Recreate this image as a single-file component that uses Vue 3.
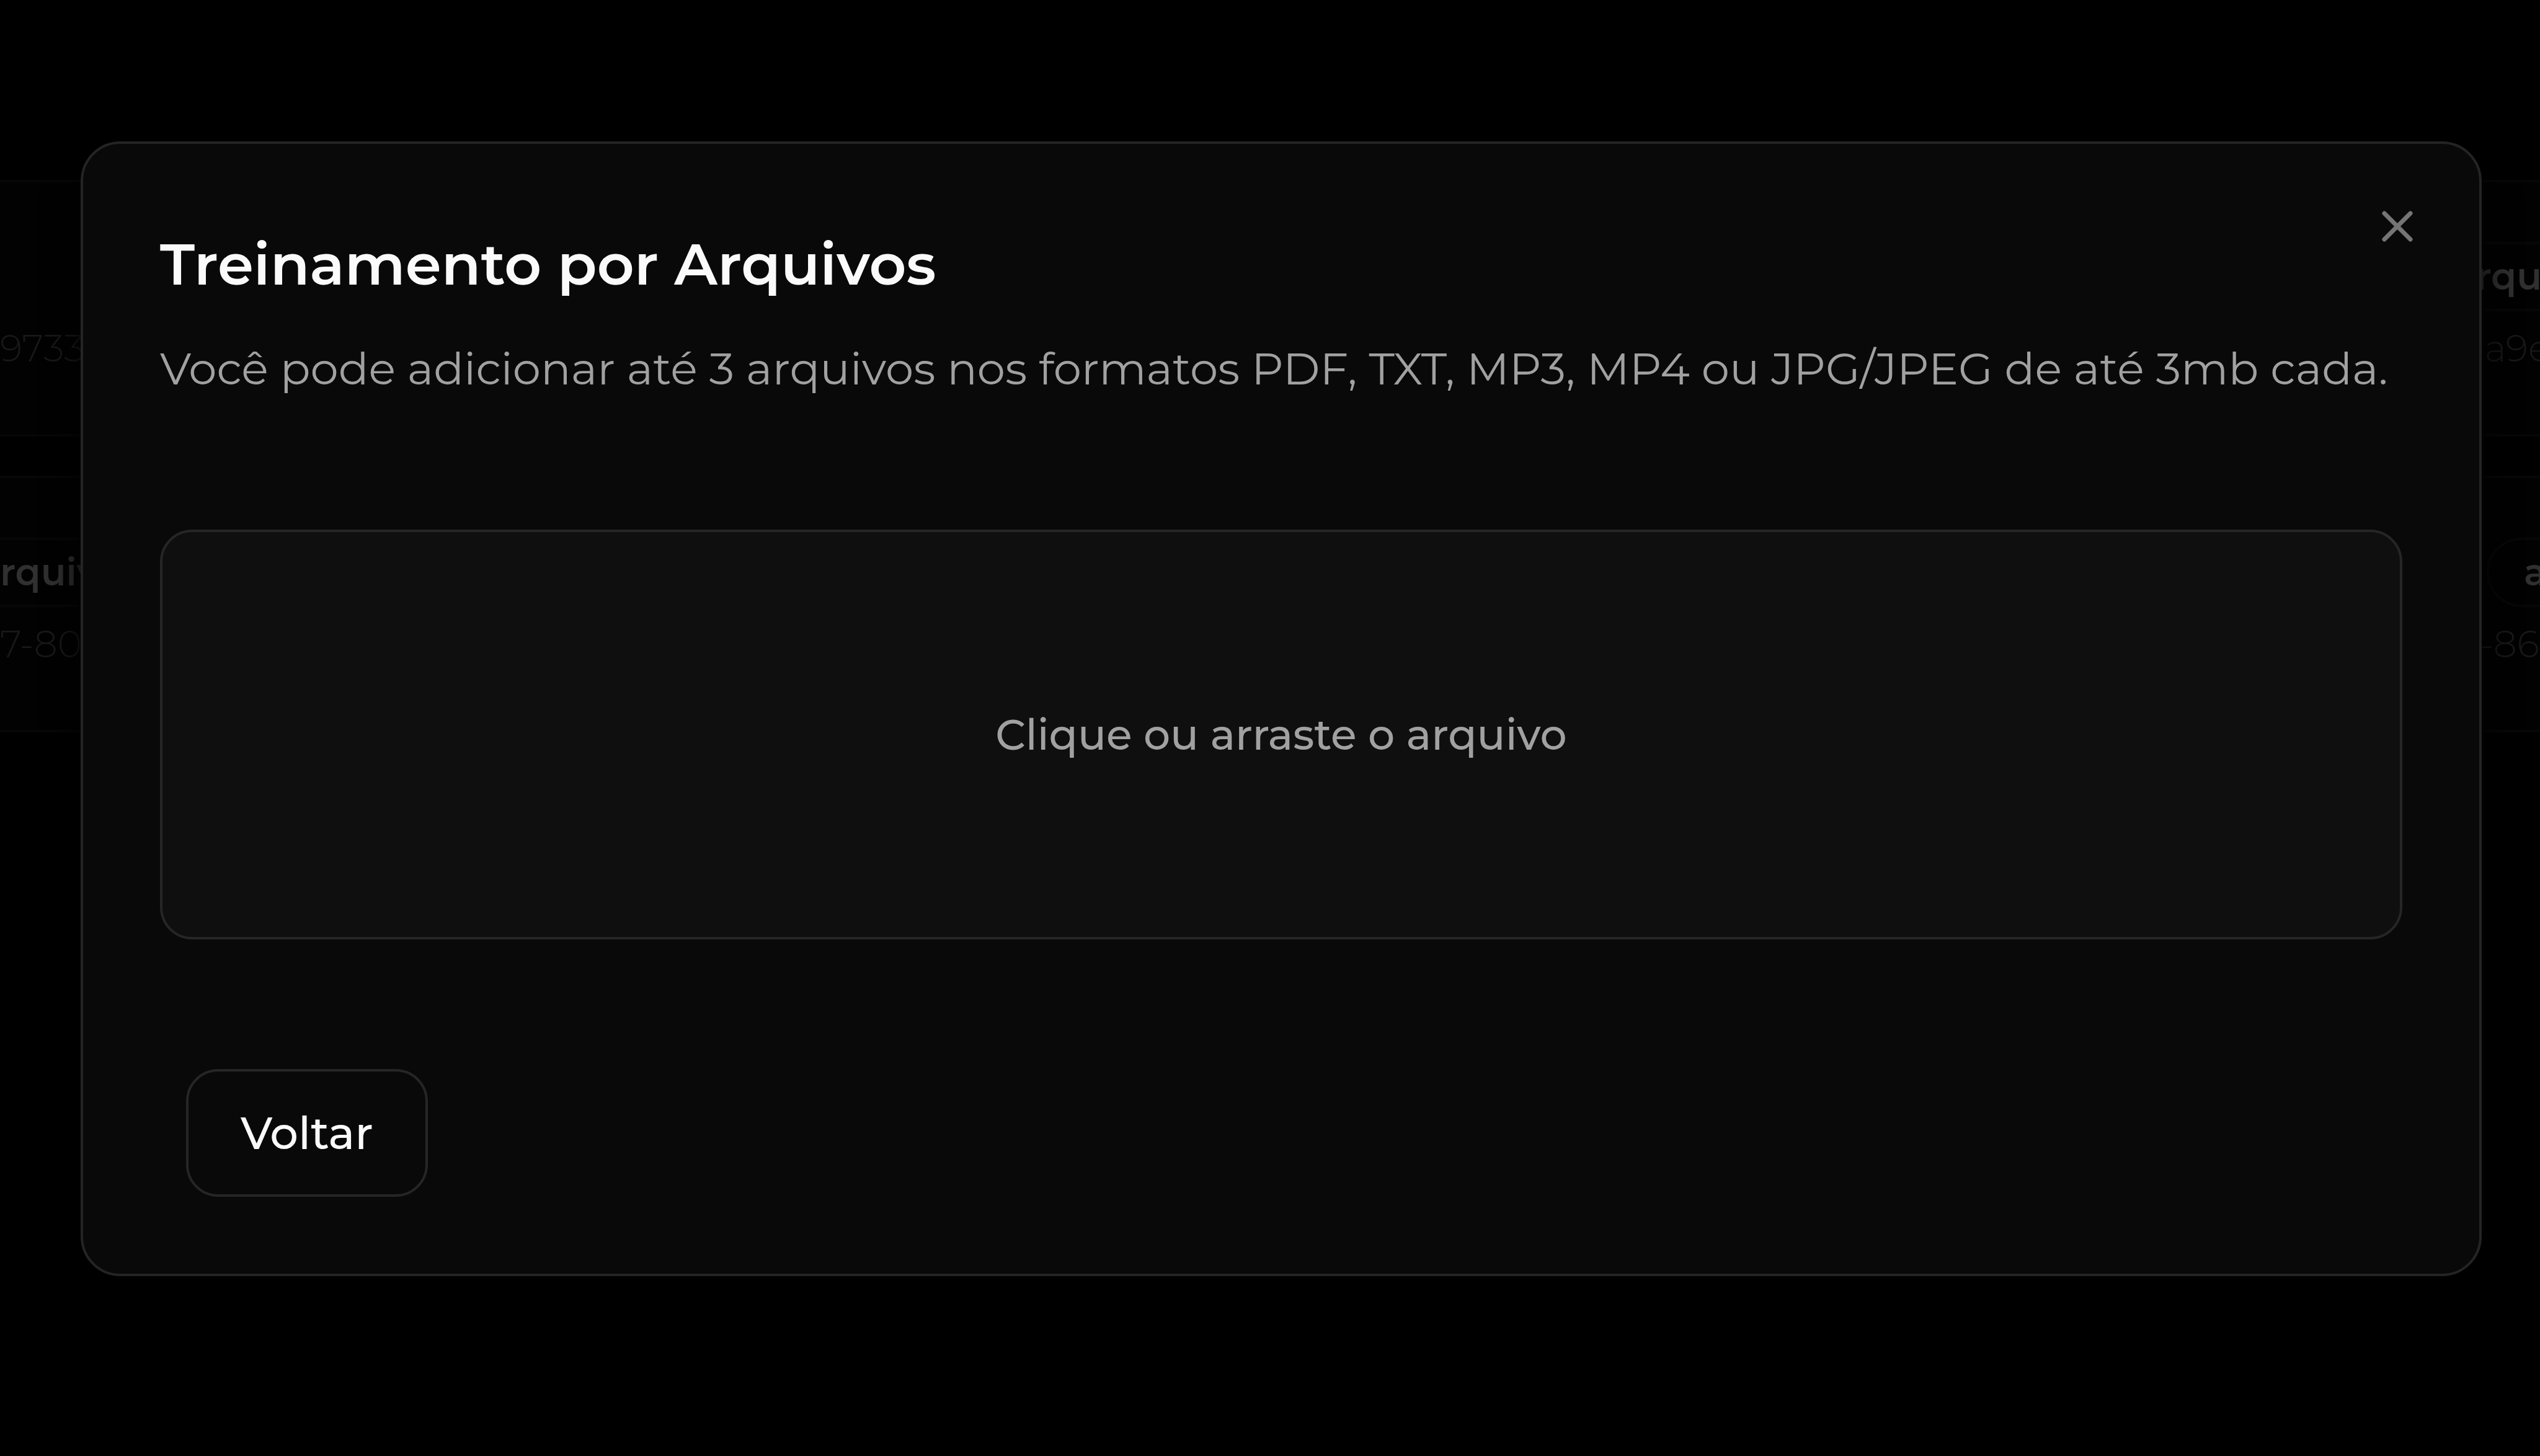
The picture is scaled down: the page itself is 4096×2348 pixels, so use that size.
<script setup>
import { ref } from 'vue'

const open = ref(true)
const rows = [
  { left: { tag: '', id: '97339' }, right: { tag: 'arqui', id: '-a9e' }, shift: 'near' },
  { left: { tag: 'rquiv', id: '7-80' }, right: { tag: 'a', id: '-86' }, shift: 'far' },
]
</script>

<template>
  <div class="page">
    <main class="list" aria-hidden="true">
      <article v-for="row in rows" :key="row.left.id" class="card">
        <div class="cell start">
          <span class="tag" :class="{ empty: !row.left.tag }">{{ row.left.tag }}</span>
          <span class="id">{{ row.left.id }}</span>
        </div>
        <div class="cell end" :class="row.shift">
          <span class="tag">{{ row.right.tag }}</span>
          <span class="id">{{ row.right.id }}</span>
        </div>
      </article>
    </main>

    <div v-if="open" class="overlay">
      <section class="modal" role="dialog" aria-modal="true" aria-labelledby="modal-title">
        <button class="close" type="button" aria-label="Fechar" @click="open = false">
          <svg viewBox="0 0 24 24" fill="none" stroke="currentColor" stroke-width="2" stroke-linecap="round">
            <path d="M18 6 6 18M6 6l12 12" />
          </svg>
        </button>
        <h1 id="modal-title" class="title">Treinamento por Arquivos</h1>
        <p class="subtitle">Você pode adicionar até 3 arquivos nos formatos PDF, TXT, MP3, MP4 ou JPG/JPEG de até 3mb cada.</p>
        <button class="dropzone" type="button">Clique ou arraste o arquivo</button>
        <button class="back" type="button">Voltar</button>
      </section>
    </div>
  </div>
</template>

<style>
body {
  background: #000;
}
</style>

<style scoped>
.page {
  position: relative;
  min-height: 100vh;
  overflow: hidden;
  background: #000;
  font-family: Montserrat, Inter, sans-serif;
}

.page * {
  box-sizing: border-box;
}

.list {
  display: flex;
  flex-direction: column;
  gap: 63px;
  padding-top: 290px;
}

.card {
  display: flex;
  justify-content: space-between;
  height: 414px;
  padding-top: 96px;
  overflow: hidden;
  background: #020202;
  border-top: 4px solid #070707;
  border-bottom: 4px solid #070707;
}

.cell {
  display: flex;
  flex-direction: column;
  align-items: flex-start;
  gap: 20px;
  white-space: nowrap;
}

.tag {
  height: 112px;
  padding: 0 56px;
  border: 4px solid #070707;
  border-radius: 56px;
  color: #303030;
  font-size: 60px;
  font-weight: 600;
  line-height: 104px;
}

.start .tag {
  padding-left: 0;
  border-left: 0;
  border-radius: 0;
}

.tag.empty {
  visibility: hidden;
}

.id {
  color: #181818;
  font-size: 60px;
  font-weight: 300;
  line-height: 80px;
}

.end {
  width: 120px;
}

.end.far {
  width: 86px;
}

.near .tag {
  margin-left: -80px;
}

.near .id {
  margin-left: 8px;
}

.far .id {
  margin-left: -12px;
}

.overlay {
  position: absolute;
  inset: 0;
  padding: 228px 94px 0 130px;
}

.modal {
  position: relative;
  display: flex;
  flex-direction: column;
  align-items: flex-start;
  padding: 124px;
  background: #090909;
  border: 4px solid #242424;
  border-radius: 64px;
  box-shadow: 0 40px 60px #000;
}

.title {
  margin: 0 0 44px;
  color: #fafafa;
  font-size: 93px;
  font-weight: 600;
  line-height: 140px;
}

.subtitle {
  margin: 0 0 206px;
  color: #a1a1a1;
  font-size: 72px;
  font-weight: 400;
  line-height: 108px;
  white-space: nowrap;
}

button {
  margin: 0;
  font-family: inherit;
  cursor: pointer;
}

.dropzone {
  align-self: stretch;
  height: 661px;
  margin-bottom: 209px;
  background: #0f0f0f;
  border: 4px solid #262626;
  border-radius: 52px;
  color: #a1a1a1;
  font-size: 68px;
  font-weight: 500;
}

.back {
  height: 206px;
  margin-left: 42px;
  padding: 0 84px;
  background: transparent;
  border: 4px solid #262626;
  border-radius: 52px;
  color: #fafafa;
  font-size: 72px;
  font-weight: 500;
}

.close {
  position: absolute;
  top: 91px;
  right: 90px;
  width: 84px;
  height: 84px;
  padding: 0;
  background: none;
  border: 0;
  color: #757575;
}

.close svg {
  display: block;
  width: 100%;
}
</style>
